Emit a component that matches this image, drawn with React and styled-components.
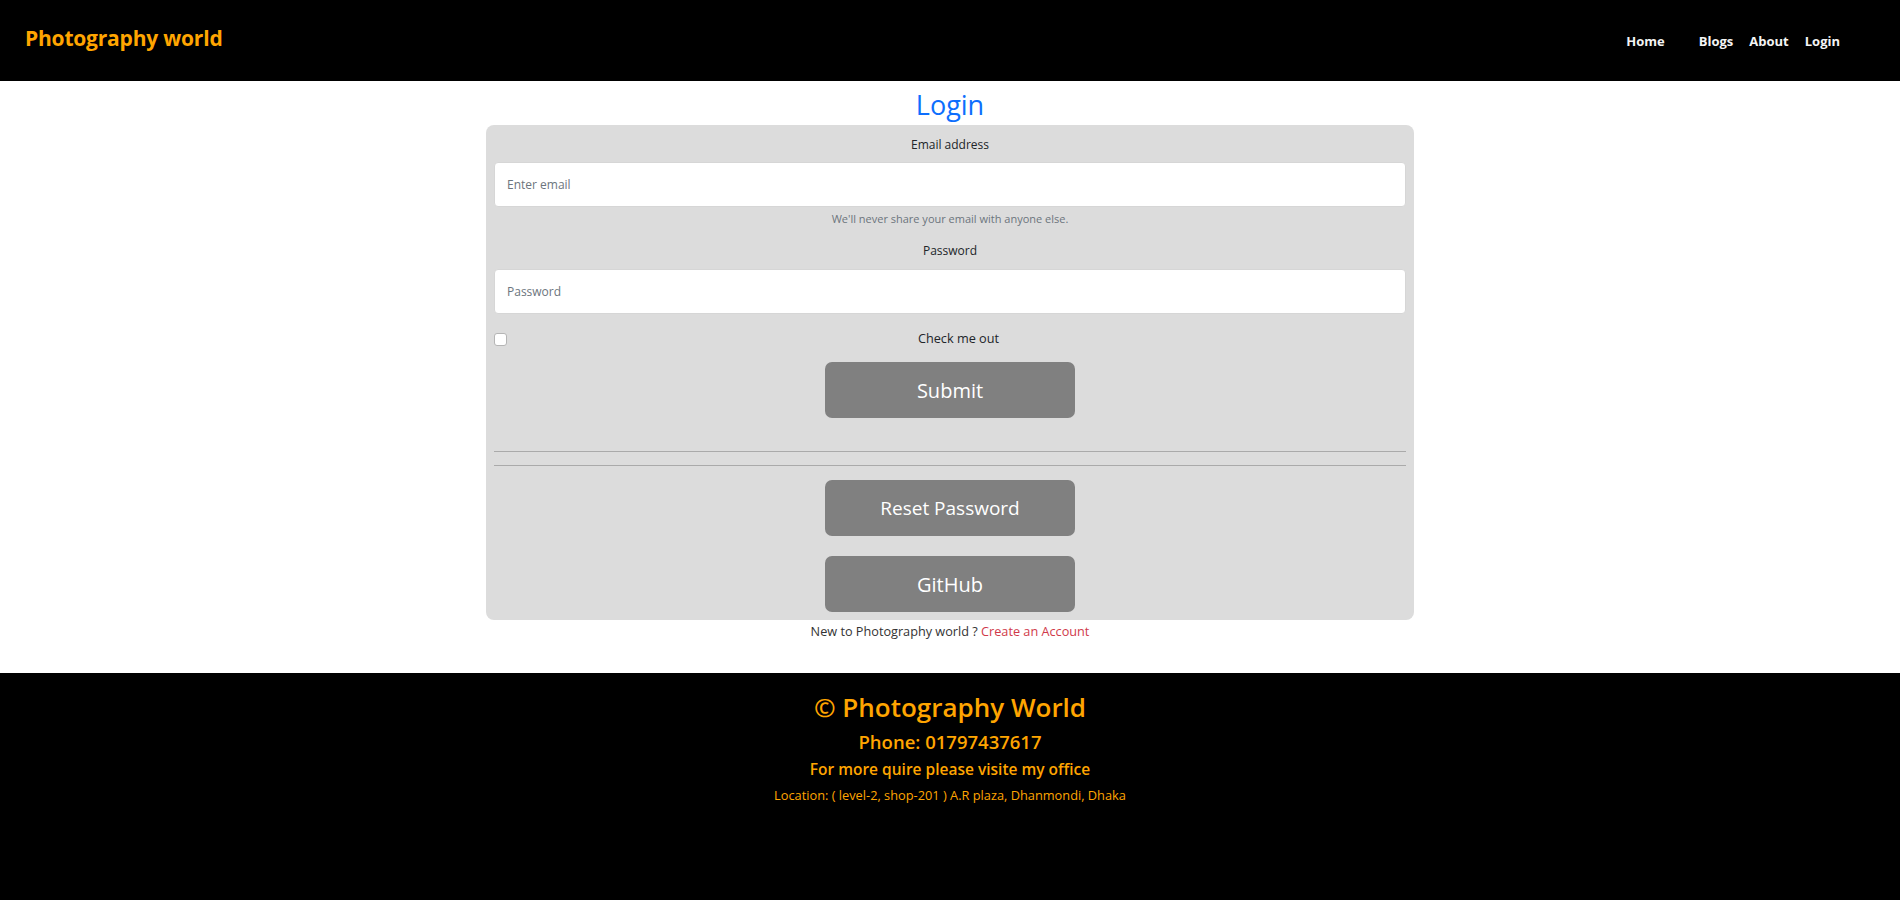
import React from "react";
import styled, { createGlobalStyle } from "styled-components";

const GlobalStyle = createGlobalStyle`
  html, body { margin: 0; padding: 0; background: #ffffff; }
  body { font-family: "Open Sans", "Noto Sans", sans-serif; color: #212529; }
  * { box-sizing: border-box; }
`;

const Header = styled.header`
  height: 81px;
  background: #000;
  display: flex;
  align-items: center;
  justify-content: space-between;
  padding: 0 60px 0 25px;
`;

const Brand = styled.a`
  color: #ffa500;
  font-weight: 700;
  font-size: 21px;
  text-decoration: none;
  margin-top: -5px;
  letter-spacing: -0.2px;
`;

const Nav = styled.nav`
  display: flex;
  align-items: center;
  gap: 16px;
`;

const NavLink = styled.a`
  color: #f4f4f4;
  font-weight: 700;
  font-size: 13px;
  text-decoration: none;
  margin-right: ${(p) => (p.$wide ? "18px" : "0")};
`;

const Main = styled.main`
  text-align: center;
`;

const Title = styled.h2`
  margin: 8px 0 5px;
  font-size: 27px;
  line-height: 31px;
  font-weight: 400;
  color: #0d6efd;
`;

const Card = styled.form`
  width: 928px;
  margin: 0 auto;
  background: #dcdcdc;
  border-radius: 8px;
  padding: 10px 8px 8px 8px;
  display: flex;
  flex-direction: column;
  align-items: stretch;
`;

const Label = styled.label`
  display: block;
  font-size: 12px;
  line-height: 20px;
  color: #212529;
  margin-bottom: ${(p) => p.$mb || "7px"};
`;

const Input = styled.input`
  display: block;
  width: 100%;
  height: 45px;
  border: 1px solid #d6d6d6;
  border-radius: 4px;
  background: #fff;
  padding: 0 12px;
  font-family: inherit;
  font-size: 12px;
  color: #212529;
  outline: none;
  &::placeholder { color: #6c757d; }
`;

const Help = styled.div`
  font-size: 11px;
  line-height: 16px;
  margin-top: 4px;
  color: #6c757d;
`;

const Group = styled.div`
  margin-bottom: ${(p) => p.$mb || "0"};
`;

const CheckRow = styled.div`
  display: flex;
  align-items: center;
  margin-top: 14px;
  height: 20px;
`;

const Check = styled.input`
  appearance: none;
  width: 13px;
  height: 13px;
  margin: 2px 0 0 0;
  background: #fff;
  border: 1px solid #b5b5b5;
  border-radius: 3px;
  flex: none;
`;

const CheckLabel = styled.label`
  flex: 1;
  text-align: center;
  font-size: 12.7px;
  line-height: 20px;
  padding-left: 4px;
`;

const Button = styled.button`
  display: block;
  width: 250px;
  height: 56px;
  margin: ${(p) => p.$m || "0 auto"};
  border: none;
  border-radius: 7px;
  background: #808080;
  color: #fff;
  font-family: inherit;
  font-size: ${(p) => p.$size || "20px"};
  cursor: pointer;
`;

const Rule = styled.hr`
  border: none;
  height: 1px;
  background: #aaaaaa;
  margin: ${(p) => p.$m || "0"};
  width: 100%;
`;

const Footnote = styled.p`
  margin: 1px 0 32px;
  font-size: 12.7px;
  line-height: 20px;
  color: #333;
`;

const Link = styled.a`
  color: #d03a4a;
  text-decoration: none;
`;

const Footer = styled.footer`
  background: #000;
  min-height: 228px;
  padding-top: 18px;
  text-align: center;
  color: #ffa500;
`;

const FootLine = styled.div`
  font-size: ${(p) => p.$size};
  font-weight: ${(p) => p.$weight || 400};
  line-height: ${(p) => p.$lh};
  margin-top: ${(p) => p.$mt || "0"};
`;

export default function App() {
  return (
    <>
      <GlobalStyle />
      <Header>
        <Brand href="#">Photography world</Brand>
        <Nav>
          <NavLink href="#" $wide>Home</NavLink>
          <NavLink href="#">Blogs</NavLink>
          <NavLink href="#">About</NavLink>
          <NavLink href="#">Login</NavLink>
        </Nav>
      </Header>
      <Main>
        <Title>Login</Title>
        <Card onSubmit={(e) => e.preventDefault()}>
          <Group $mb="14px">
            <Label htmlFor="email">Email address</Label>
            <Input id="email" type="email" placeholder="Enter email" />
            <Help>We'll never share your email with anyone else.</Help>
          </Group>
          <Group>
            <Label htmlFor="pw" $mb="8px">Password</Label>
            <Input id="pw" type="password" placeholder="Password" />
          </Group>
          <CheckRow>
            <Check type="checkbox" id="chk" />
            <CheckLabel htmlFor="chk">Check me out</CheckLabel>
          </CheckRow>
          <Button type="submit" $m="14px auto 0">Submit</Button>
          <Rule $m="33px 0 0" />
          <Rule $m="13px 0 0" />
          <Button type="button" $m="14px auto 0" $size="19px">Reset Password</Button>
          <Button type="button" $m="20px auto 0">GitHub</Button>
        </Card>
        <Footnote>
          New to Photography world ? <Link href="#">Create an Account</Link>
        </Footnote>
      </Main>
      <Footer>
        <FootLine $size="26px" $weight={600} $lh="32px">© Photography World</FootLine>
        <FootLine $size="18.5px" $weight={600} $lh="24px" $mt="7px">Phone: 01797437617</FootLine>
        <FootLine $size="15.5px" $weight={600} $lh="20px" $mt="5px">For more quire please visite my office</FootLine>
        <FootLine $size="12.8px" $lh="20px" $mt="6px">Location: ( level-2, shop-201 ) A.R plaza, Dhanmondi, Dhaka</FootLine>
      </Footer>
    </>
  );
}
